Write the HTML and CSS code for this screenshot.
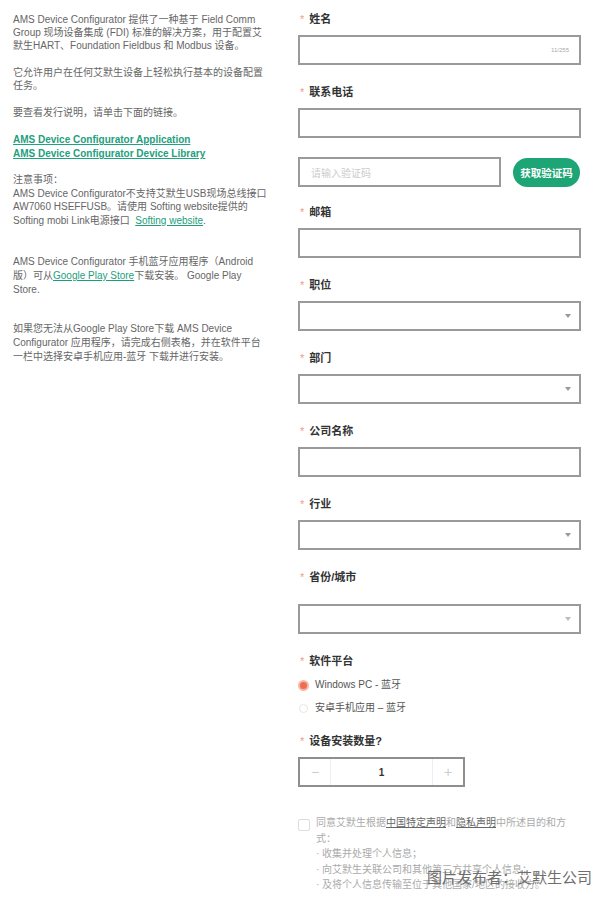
FILE: index.html
```html
<!DOCTYPE html>
<html lang="zh-CN">
<head>
    <meta charset="UTF-8">
    <meta name="viewport" content="width=device-width, initial-scale=1.0">
    <title>AMS Device Configurator</title>
    <link rel="stylesheet" href="styles.css">
</head>
<body>
    <div class="page">
        <div class="intro">
            <p class="p1">AMS Device Configurator 提供了一种基于 Field Comm<br>Group 现场设备集成 (FDI) 标准的解决方案，用于配置艾<br>默生HART、Foundation Fieldbus 和 Modbus 设备。</p>
            <p class="p2">它允许用户在任何艾默生设备上轻松执行基本的设备配置<br>任务。</p>
            <p class="p3">要查看发行说明，请单击下面的链接。</p>
            <p class="links">
                <a href="#">AMS Device Configurator Application</a><br>
                <a href="#">AMS Device Configurator Device Library</a>
            </p>
            <p class="note">注意事项：<br>AMS Device Configurator不支持艾默生USB现场总线接口<br>AW7060 HSEFFUSB。请使用 Softing website提供的<br>Softing mobi Link电源接口 &nbsp;<a href="#">Softing website</a>.</p>
            <p class="android">AMS Device Configurator 手机蓝牙应用程序（Android<br>版）可从<a href="#">Google Play Store</a>下载安装。 Google Play<br>Store.</p>
            <p class="fallback">如果您无法从Google Play Store下载 AMS Device<br>Configurator 应用程序，请完成右侧表格，并在软件平台<br>一栏中选择安卓手机应用-蓝牙 下载并进行安装。</p>
        </div>

        <form class="form">
            <div class="field first">
                <label class="label"><span class="req">*</span>姓名</label>
                <div class="box"><span class="counter">11/255</span></div>
            </div>
            <div class="field">
                <label class="label"><span class="req">*</span>联系电话</label>
                <div class="box"></div>
            </div>
            <div class="captcha">
                <div class="box code"><span class="placeholder">请输入验证码</span></div>
                <button type="button" class="code-btn">获取验证码</button>
            </div>
            <div class="field email">
                <label class="label"><span class="req">*</span>邮箱</label>
                <div class="box"></div>
            </div>
            <div class="field">
                <label class="label"><span class="req">*</span>职位</label>
                <div class="box select"><span class="arrow"></span></div>
            </div>
            <div class="field">
                <label class="label"><span class="req">*</span>部门</label>
                <div class="box select"><span class="arrow"></span></div>
            </div>
            <div class="field">
                <label class="label"><span class="req">*</span>公司名称</label>
                <div class="box"></div>
            </div>
            <div class="field">
                <label class="label"><span class="req">*</span>行业</label>
                <div class="box select"><span class="arrow"></span></div>
            </div>
            <div class="field">
                <label class="label tall"><span class="req">*</span>省份/城市</label>
                <div class="box select"><span class="arrow small"></span></div>
            </div>
            <div class="field">
                <label class="label"><span class="req">*</span>软件平台</label>
                <div class="radios">
                    <div class="radio checked"><span class="dot"></span>Windows PC - 蓝牙</div>
                    <div class="radio"><span class="dot"></span>安卓手机应用 – 蓝牙</div>
                </div>
            </div>
            <div class="field qty">
                <label class="label"><span class="req">*</span>设备安装数量?</label>
                <div class="stepper">
                    <span class="step">−</span>
                    <span class="value">1</span>
                    <span class="step">+</span>
                </div>
            </div>
            <div class="consent">
                <span class="check"></span>
                <div class="consent-text">
                    同意艾默生根据<a href="#">中国特定声明</a>和<a href="#">隐私声明</a>中所述目的和方<br>式：<br>
                    · 收集并处理个人信息；<br>
                    · 向艾默生关联公司和其他第三方共享个人信息；<br>
                    · 及将个人信息传输至位于其他国家/地区的接收方。
                </div>
            </div>
        </form>
    </div>
    <div class="watermark">图片发布者：艾默生公司</div>
</body>
</html>
```

FILE: styles.css
```css
body {
    margin: 0;
    background-color: #fff;
    font-family: "Liberation Sans", "Noto Sans CJK SC", sans-serif;
    color: #666;
    width: 600px;
    height: 897px;
    overflow: hidden;
    position: relative;
}
.page {
    display: flex;
    padding: 11px 19px 0 13px;
    gap: 13px;
}
.intro {
    width: 272px;
    flex-shrink: 0;
    font-size: 10px;
    line-height: 13px;
}
.intro p {
    margin: 0;
}
.intro .p1 {
    margin-top: 2px;
}
.intro .p2,
.intro .p3,
.intro .links {
    margin-top: 14px;
}
.intro a {
    color: #1c9e7a;
    text-decoration: underline;
}
.links {
    font-size: 10px;
    line-height: 14px;
    font-weight: bold;
}
.links a {
    color: #23a07c;
}
.note {
    margin-top: 12px !important;
    line-height: 13.5px;
}
.android {
    margin-top: 28px !important;
    line-height: 14px;
}
.fallback {
    margin-top: 25px !important;
    line-height: 14px;
}

/* form */
.form {
    width: 283px;
    display: flex;
    flex-direction: column;
}
.field {
    margin-top: 19px;
}
.field.first {
    margin-top: 0;
}
.field.email {
    margin-top: 17px;
}
.label {
    display: block;
    font-size: 11px;
    line-height: 16px;
    font-weight: bold;
    color: #333;
    margin-bottom: 8px;
}
.label.tall {
    margin-bottom: 19px;
}
.req {
    color: #eaa08a;
    font-weight: normal;
    margin: 0 5px 0 2px;
}
.box {
    height: 30px;
    box-sizing: border-box;
    border: 2px solid #9a9a9a;
    position: relative;
    display: flex;
    align-items: center;
}
.counter {
    position: absolute;
    right: 10px;
    font-size: 6px;
    color: #aaa;
}
.select .arrow {
    position: absolute;
    right: 8px;
    top: 11px;
    width: 0;
    height: 0;
    border-left: 3px solid transparent;
    border-right: 3px solid transparent;
    border-top: 4px solid #999;
}
.select .arrow.small {
    border-top-color: #bbb;
}
.captcha {
    display: flex;
    align-items: center;
    gap: 12px;
    margin-top: 19px;
}
.box.code {
    width: 203px;
}
.placeholder {
    font-size: 10px;
    color: #ccc;
    margin-left: 11px;
}
.code-btn {
    width: 67px;
    height: 29px;
    border: none;
    border-radius: 15px;
    background-color: #1ea575;
    color: #fff;
    font-family: "Noto Sans CJK SC", sans-serif;
    font-size: 10.5px;
    font-weight: bold;
    padding: 0;
}
.radios {
    display: flex;
    flex-direction: column;
    gap: 7px;
    margin-top: 4px;
}
.radio {
    display: flex;
    align-items: center;
    font-size: 10px;
    line-height: 16px;
    color: #555;
}
.radio .dot {
    width: 9px;
    height: 9px;
    border-radius: 50%;
    border: 1px solid #e6e6e6;
    margin: 0 7px 0 1px;
    box-sizing: border-box;
}
.radio.checked .dot {
    background-color: #ee6e50;
    border: 2px solid #f6b7a6;
    width: 11px;
    height: 11px;
    margin: 0 6px 0 0;
}
.field.qty {
    margin-top: 17px;
}
.stepper {
    width: 167px;
    height: 30px;
    box-sizing: border-box;
    border: 2px solid #8e8e8e;
    display: flex;
}
.step {
    width: 30px;
    display: flex;
    align-items: center;
    justify-content: center;
    color: #ccc;
    font-size: 14px;
}
.step:first-child {
    border-right: 1px solid #eee;
}
.step:last-child {
    border-left: 1px solid #eee;
}
.value {
    flex: 1;
    display: flex;
    align-items: center;
    justify-content: center;
    font-size: 10px;
    font-weight: bold;
    color: #333;
}
.consent {
    display: flex;
    margin-top: 31px;
    gap: 6px;
}
.check {
    width: 10px;
    height: 10px;
    border: 1px solid #ddd;
    border-radius: 2px;
    margin-top: 1px;
    flex-shrink: 0;
}
.consent-text {
    font-size: 10px;
    line-height: 15.5px;
    color: #aaa;
    margin-top: -3px;
}
.consent-text a {
    color: #666;
    text-decoration: underline;
}
.watermark {
    position: absolute;
    left: 427px;
    top: 866px;
    font-family: "Noto Sans CJK SC", sans-serif;
    font-size: 15px;
    color: #6e6e6e;
    white-space: nowrap;
}
```
